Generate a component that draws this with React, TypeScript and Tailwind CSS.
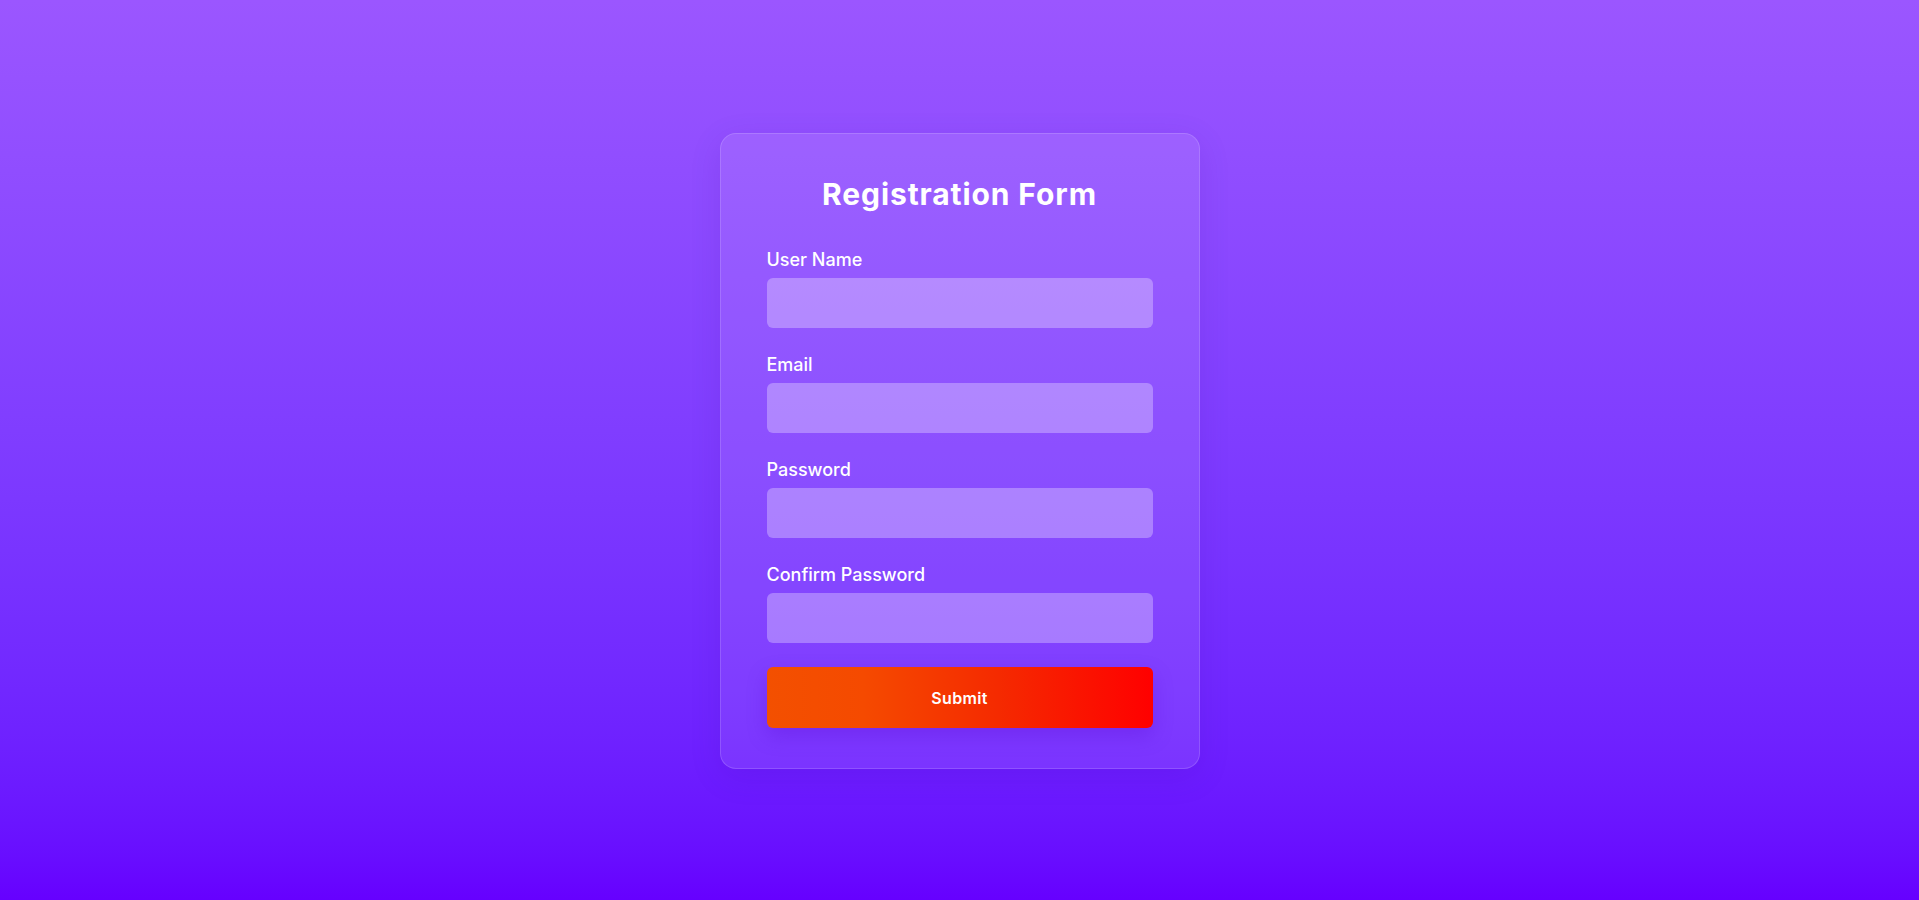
import React from "react";

const fields = ["User Name", "Email", "Password", "Confirm Password"];

export default function App() {
  return (
    <div
      className="min-h-screen w-full flex items-center justify-center bg-gradient-to-b from-[#9b56ff] to-[#6600ff]"
      style={{ fontFamily: "Inter, 'Noto Sans', sans-serif" }}
    >
      <div className="w-[480px] h-[636px] mt-[2px] rounded-2xl border border-white/15 bg-white/10 px-[46px] pt-[42px] pb-10 shadow-[0_8px_32px_rgba(60,0,160,0.12)] flex flex-col">
        <h1 className="text-[30px] leading-9 font-bold text-white text-center tracking-[0.03em] mb-[30px]">
          Registration Form
        </h1>
        {fields.map((f) => (
          <div key={f} className="mb-[19px]">
            <label className="block text-white text-[18px] leading-7 font-medium mb-[4px] pt-[4px]">{f}</label>
            <input
              type={f.toLowerCase().includes("password") ? "password" : "text"}
              className="block w-full h-[50px] rounded-md bg-white/30 outline-none border-none px-3 text-white"
            />
          </div>
        ))}
        <button className="mt-[5px] w-full h-[61px] rounded-md bg-[linear-gradient(90deg,#f35000_0%,#f54a00_25%,#f52a00_60%,#ff0000_100%)] text-white text-base font-semibold tracking-[0.02em] shadow-[0_8px_20px_rgba(80,0,200,0.25)]">
          Submit
        </button>
      </div>
    </div>
  );
}
